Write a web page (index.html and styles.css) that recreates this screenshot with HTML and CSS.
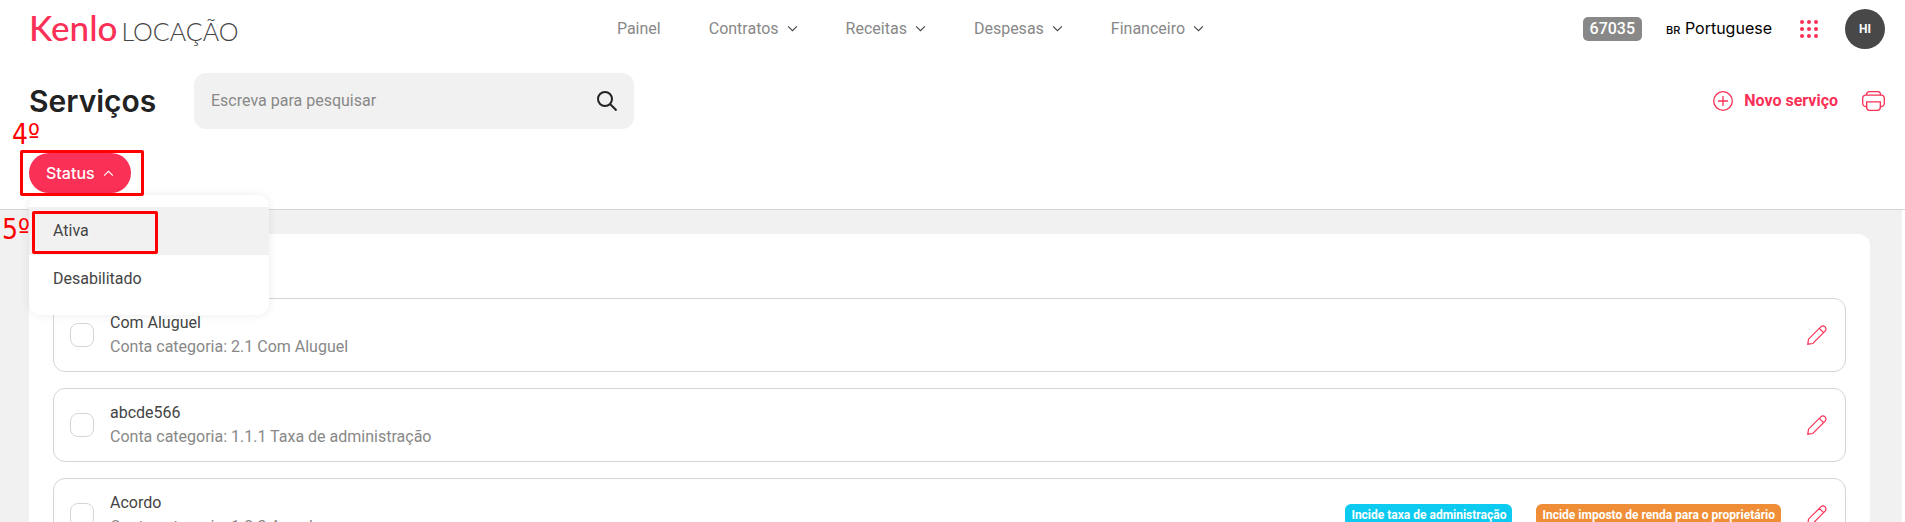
FILE: index.html
```html
<!DOCTYPE html>
<html lang="pt-BR">
<head>
    <meta charset="UTF-8">
    <meta name="viewport" content="width=device-width, initial-scale=1.0">
    <title>Kenlo Locação - Serviços</title>
    <link rel="stylesheet" href="styles.css">
</head>
<body>
    <!-- shared icons -->
    <svg class="sprite" aria-hidden="true">
        <symbol id="chevron" viewBox="0 0 10 6"><path d="M1 1l4 4 4-4"/></symbol>
        <symbol id="pencil" viewBox="0 0 20 20"><path d="M.8 19.2l.7-5L13.800 1.900a3 3 0 0 1 4.300 4.300L5.800 18.500zM12.300 3.400l4.300 4.300"/></symbol>
    </svg>

    <header class="topbar">
        <a href="#" class="logo"><span class="logo-brand">Kenlo</span><span class="logo-product">LOCAÇÃO</span></a>
        <nav class="menu">
            <a href="#">Painel</a>
            <a href="#">Contratos <svg class="chevron"><use href="#chevron"/></svg></a>
            <a href="#">Receitas <svg class="chevron"><use href="#chevron"/></svg></a>
            <a href="#">Despesas <svg class="chevron"><use href="#chevron"/></svg></a>
            <a href="#">Financeiro <svg class="chevron"><use href="#chevron"/></svg></a>
        </nav>
        <div class="account">
            <span class="code">67035</span>
            <button class="language" type="button"><small>BR</small> Portuguese</button>
            <button class="apps" type="button" aria-label="Aplicativos">
                <svg width="18" height="18" viewBox="0 0 18 18" fill="currentColor">
                    <circle cx="2" cy="2" r="2"/><circle cx="9" cy="2" r="2"/><circle cx="16" cy="2" r="2"/>
                    <circle cx="2" cy="9" r="2"/><circle cx="9" cy="9" r="2"/><circle cx="16" cy="9" r="2"/>
                    <circle cx="2" cy="16" r="2"/><circle cx="9" cy="16" r="2"/><circle cx="16" cy="16" r="2"/>
                </svg>
            </button>
            <button class="avatar" type="button">HI</button>
        </div>
    </header>

    <section class="toolbar">
        <h1>Serviços</h1>
        <form class="search">
            <input type="text" placeholder="Escreva para pesquisar" aria-label="Escreva para pesquisar">
            <button type="submit" aria-label="Pesquisar">
                <svg width="20" height="20" viewBox="0 0 20 20" fill="none" stroke="currentColor" stroke-width="2"><circle cx="8" cy="8" r="7"/><path d="M13 13l6.500 6.500"/></svg>
            </button>
        </form>
        <div class="actions">
            <button class="new-service" type="button">
                <svg width="20" height="20" viewBox="0 0 20 20" fill="none" stroke="currentColor" stroke-width="1.300"><circle cx="10" cy="10" r="9.300"/><path d="M10 5v10M5 10h10"/></svg>
                Novo serviço
            </button>
            <button type="button" aria-label="Imprimir">
                <svg width="23" height="20" viewBox="0 0 23 20" fill="none" stroke="currentColor" stroke-width="1.300"><path d="M4.500 4.200V3.500A2.800 2.800 0 0 1 7.300.7h8.400a2.800 2.800 0 0 1 2.800 2.800v.7M4.500 15.500H3.600A2.900 2.900 0 0 1 .7 12.600V7a2.900 2.900 0 0 1 2.900-2.900h15.800A2.900 2.900 0 0 1 22.300 7v5.600a2.900 2.900 0 0 1-2.900 2.900h-.9"/><path d="M4.700 10.800h13.600v5.700a2.800 2.800 0 0 1-2.800 2.800H7.500a2.800 2.800 0 0 1-2.800-2.800z"/></svg>
            </button>
        </div>
    </section>

    <section class="filters">
        <div class="filter">
            <button class="status-btn" type="button" aria-expanded="true">Status <svg class="chevron up"><use href="#chevron"/></svg></button>
            <div class="dropdown">
                <button class="hover" type="button">Ativa</button>
                <button type="button">Desabilitado</button>
            </div>
        </div>
        <span class="step step-4">4º</span>
        <span class="mark mark-status"></span>
        <span class="step step-5">5º</span>
        <span class="mark mark-ativa"></span>
    </section>

    <main class="content">
        <div class="card">
            <div class="service">
                <input type="checkbox" id="service-1">
                <label for="service-1"><span class="name">Com Aluguel</span><span>Conta categoria: 2.1 Com Aluguel</span></label>
                <button class="edit" type="button" aria-label="Editar"><svg><use href="#pencil"/></svg></button>
            </div>
            <div class="service">
                <input type="checkbox" id="service-2">
                <label for="service-2"><span class="name">abcde566</span><span>Conta categoria: 1.1.1 Taxa de administração</span></label>
                <button class="edit" type="button" aria-label="Editar"><svg><use href="#pencil"/></svg></button>
            </div>
            <div class="service">
                <input type="checkbox" id="service-3">
                <label for="service-3"><span class="name">Acordo</span><span>Conta categoria: 1.2.3 Acordo</span></label>
                <div class="tags">
                    <span class="tag tag-blue">Incide taxa de administração</span>
                    <span class="tag tag-orange">Incide imposto de renda para o proprietário</span>
                </div>
                <button class="edit" type="button" aria-label="Editar"><svg><use href="#pencil"/></svg></button>
            </div>
        </div>
    </main>
</body>
</html>
```
FILE: styles.css
```css
* {
    box-sizing: border-box;
}
body {
    margin: 0;
    height: 100vh;
    overflow: hidden;
    font-family: Roboto, Inter, sans-serif;
    font-size: 16px;
    line-height: 24px;
    color: #444444;
    background: #ffffff;
}
a {
    color: inherit;
    text-decoration: none;
}
button {
    padding: 0;
    border: none;
    background: none;
    font: inherit;
    color: inherit;
    cursor: pointer;
}
svg {
    display: block;
}
.sprite {
    position: absolute;
    width: 0;
    height: 0;
}
.chevron {
    width: 11px;
    height: 7px;
    fill: none;
    stroke: #444444;
    stroke-width: 1;
}
.chevron.up {
    transform: rotate(180deg);
    stroke: #ffffff;
}

/* top bar */
.topbar {
    display: flex;
    align-items: center;
    justify-content: space-between;
    height: 57px;
    padding: 0 20px 0 29px;
}
.logo {
    display: flex;
    align-items: baseline;
    gap: 4px;
    font-family: Lato, sans-serif;
    line-height: 28px;
}
.logo-brand {
    font-size: 35px;
    font-weight: 500;
    color: #fa3056;
}
.logo-product {
    font-size: 25px;
    font-weight: 300;
}
.menu {
    display: flex;
    gap: 48px;
    color: #888888;
}
.menu a {
    display: flex;
    align-items: center;
    gap: 8px;
}
.account {
    display: flex;
    align-items: center;
}
.code {
    padding: 0 7px;
    border-radius: 5px;
    background: #888888;
    color: #ffffff;
    font-weight: 500;
}
.language {
    margin-left: 24px;
    font-family: Inter, sans-serif;
    color: #000000;
}
.language small {
    font-size: 11px;
    font-weight: 500;
}
.apps {
    margin: 0 27px 0 28px;
    color: #fa3056;
}
.avatar {
    width: 40px;
    height: 40px;
    border-radius: 50%;
    background: #484848;
    color: #ffffff;
    font-size: 12px;
    font-weight: 700;
}

/* title and search */
.toolbar {
    display: flex;
    align-items: center;
    padding: 16px 20px 0 29px;
}
h1 {
    flex: 0 0 165px;
    margin: 0;
    font-family: Inter, sans-serif;
    font-size: 30px;
    line-height: 40px;
    font-weight: 600;
    color: #222222;
}
.search {
    display: flex;
    align-items: center;
    width: 440px;
    height: 56px;
    padding: 0 17px;
    border-radius: 12px;
    background: #f1f1f1;
    color: #222222;
}
.search input {
    flex: 1;
    min-width: 0;
    padding: 0;
    border: none;
    outline: none;
    background: none;
    font: inherit;
}
.search input::placeholder {
    color: #888888;
}
.actions {
    display: flex;
    align-items: center;
    gap: 24px;
    margin-left: auto;
    color: #fa3056;
}
.new-service {
    display: flex;
    align-items: center;
    gap: 11px;
    font-weight: 700;
}

/* filters */
.filters {
    position: relative;
    padding: 24px 29px 16px;
    border-bottom: 1px solid #d5d5d5;
}
.filter {
    position: relative;
    display: inline-block;
    vertical-align: top;
}
.status-btn {
    display: flex;
    align-items: center;
    gap: 8px;
    height: 40px;
    padding: 0 17px;
    border-radius: 20px;
    background: #fa3056;
    color: #ffffff;
    font-family: Inter, sans-serif;
    font-weight: 500;
}
.dropdown {
    position: absolute;
    z-index: 2;
    top: 42px;
    left: 0;
    width: 240px;
    padding: 12px 0;
    border-radius: 12px;
    background: #ffffff;
    box-shadow: 0 0 10px rgba(0, 0, 0, 0.08);
}
.dropdown button {
    display: block;
    width: 100%;
    height: 48px;
    padding: 0 24px;
    text-align: left;
}
.dropdown .hover {
    background: #f1f1f1;
}

/* tutorial marks */
.mark {
    position: absolute;
    z-index: 3;
    border: 3px solid #ff0000;
    border-radius: 2px;
}
.mark-status {
    top: 21px;
    left: 20px;
    width: 124px;
    height: 46px;
}
.mark-ativa {
    top: 82px;
    left: 32px;
    width: 126px;
    height: 43px;
}
.step {
    position: absolute;
    z-index: 3;
    font-family: "DejaVu Sans Condensed", "DejaVu Sans", sans-serif;
    font-size: 28px;
    line-height: 32px;
    color: #ff0000;
}
.step-4 {
    top: -10px;
    left: 12px;
}
.step-5 {
    top: 85px;
    left: 2px;
}

/* list */
.content {
    margin-right: 3px;
    padding: 24px 32px 24px 29px;
    background: #f1f1f1;
}
.card {
    display: flex;
    flex-direction: column;
    gap: 16px;
    padding: 64px 24px 24px;
    border-radius: 12px;
    background: #ffffff;
}
.service {
    display: flex;
    align-items: center;
    padding: 12px 18px 12px 16px;
    border: 1px solid #d5d5d5;
    border-radius: 12px;
}
.service input {
    appearance: none;
    width: 24px;
    height: 24px;
    margin: 0 16px 0 0;
    border: 1px solid #d5d5d5;
    border-radius: 8px;
}
.service label {
    flex: 1;
    color: #888888;
}
.service label span {
    display: block;
}
.service .name {
    color: #444444;
}
.tags {
    display: flex;
    gap: 24px;
    margin-right: 26px;
}
.tag {
    padding: 0 6px;
    border-radius: 6px;
    color: #ffffff;
    font-size: 12px;
    line-height: 22px;
    font-weight: 700;
}
.tag-blue {
    background: #0dcaf0;
}
.tag-orange {
    background: #ef8e36;
}
.edit svg {
    width: 20px;
    height: 20px;
    fill: none;
    stroke: #fa3056;
    stroke-width: 1.200;
}
```
